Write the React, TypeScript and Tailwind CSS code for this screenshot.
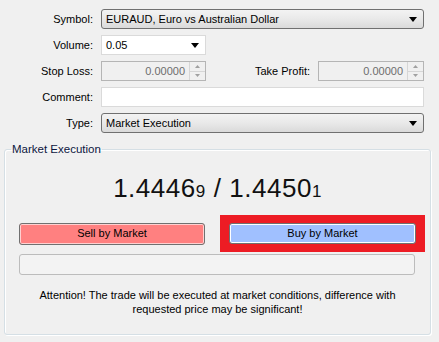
import React from 'react';

const font = { fontFamily: '"Liberation Sans", Arial, sans-serif' };

const Arrow = () => (
    <svg width="8" height="5" viewBox="0 0 8 5" className="shrink-0">
        <path d="M0 0h8L4 5z" fill="#000" />
    </svg>
);

const Combo = ({ value, width }: { value: string; width: string }) => (
    <div className={`${width} h-[20px] flex items-center justify-between pl-[4px] pr-[6px] border border-[#707070] rounded-[3px] bg-gradient-to-b from-[#f3f3f3] via-[#e9e9e9] to-[#dadada]`}>
        <span>{value}</span>
        <Arrow />
    </div>
);

const Spin = () => (
    <div className="flex flex-col w-[16px] h-full border-l border-[#d6d6d6]">
        <div className="flex-1 flex items-center justify-center border-b border-[#d6d6d6]">
            <svg width="5" height="3" viewBox="0 0 5 3"><path d="M0 3h5L2.5 0z" fill="#a0a0a0" /></svg>
        </div>
        <div className="flex-1 flex items-center justify-center">
            <svg width="5" height="3" viewBox="0 0 5 3"><path d="M0 0h5L2.5 3z" fill="#a0a0a0" /></svg>
        </div>
    </div>
);

const PriceInput = ({ width }: { width: string }) => (
    <div className={`${width} h-[20px] flex items-stretch border border-[#b5b5b5] bg-[#f0f0f0]`}>
        <div className="flex-1 flex items-center justify-end pr-[4px] text-[#6d6d6d]">0.00000</div>
        <Spin />
    </div>
);

const Label = ({ children }: { children: React.ReactNode }) => (
    <div className="w-[93px] shrink-0 text-right">{children}</div>
);

export default function App() {
    return (
        <div className="w-[439px] h-[342px] bg-[#f0f0f0] text-[11px] text-black overflow-hidden" style={font}>
            <div className="flex flex-col gap-[6px] pt-[9px]">
                <div className="flex items-center gap-[8px]">
                    <Label>Symbol:</Label>
                    <Combo value="EURAUD, Euro vs Australian Dollar" width="w-[323px]" />
                </div>
                <div className="flex items-center gap-[8px]">
                    <Label>Volume:</Label>
                    <div className="w-[105px] h-[20px] flex items-center justify-between pl-[4px] pr-[6px] border border-[#dadada] bg-white">
                        <span>0.05</span>
                        <Arrow />
                    </div>
                </div>
                <div className="flex items-center gap-[8px]">
                    <Label>Stop Loss:</Label>
                    <PriceInput width="w-[105px]" />
                    <div className="w-[96px] text-right">Take Profit:</div>
                    <PriceInput width="w-[106px]" />
                </div>
                <div className="flex items-center gap-[8px]">
                    <Label>Comment:</Label>
                    <div className="w-[323px] h-[20px] border border-[#dadada] bg-white" />
                </div>
                <div className="flex items-center gap-[8px]">
                    <Label>Type:</Label>
                    <Combo value="Market Execution" width="w-[323px]" />
                </div>
            </div>

            <fieldset className="ml-[4px] mt-[9px] w-[426px] h-[193px] border border-[#d5dfe5] rounded-[3px] shadow-[inset_1px_1px_0_#ffffff,1px_1px_0_#ffffff]">
                <legend className="ml-[6px] px-[1px] text-[#0c1640] text-[11.5px] leading-[14px]">Market Execution</legend>
                <div className="flex justify-center items-baseline mt-[18px] text-[26px] leading-[28px] tracking-[0.5px] text-[#111]">
                    <span>1.4446</span>
                    <span className="text-[17px]">9</span>
                    <span className="mx-[8px]">/</span>
                    <span>1.4450</span>
                    <span className="text-[17px]">1</span>
                </div>
                <div className="flex items-center mt-[9px] pl-[14px] pr-[5px]">
                    <button className="w-[186px] h-[22px] border border-[#707070] rounded-[3px] bg-[#ff8080] shadow-[inset_0_0_0_1px_#ffd0d0]">Sell by Market</button>
                    <div className="ml-[15px] w-[205px] h-[37px] bg-[#ed1c24] flex items-center justify-center">
                        <button className="w-[187px] h-[21px] border border-[#707070] rounded-[3px] bg-[#a0c0ff] shadow-[inset_0_0_0_1px_#ffffff]">Buy by Market</button>
                    </div>
                </div>
                <div className="ml-[14px] mt-[2px] w-[396px] h-[21px] border border-[#bcbcbc] rounded-[3px] bg-[#f3f3f3]" />
                <p className="mt-[13px] text-center leading-[14px] px-[10px]">
                    Attention! The trade will be executed at market conditions, difference with requested price may be significant!
                </p>
            </fieldset>
        </div>
    );
}
